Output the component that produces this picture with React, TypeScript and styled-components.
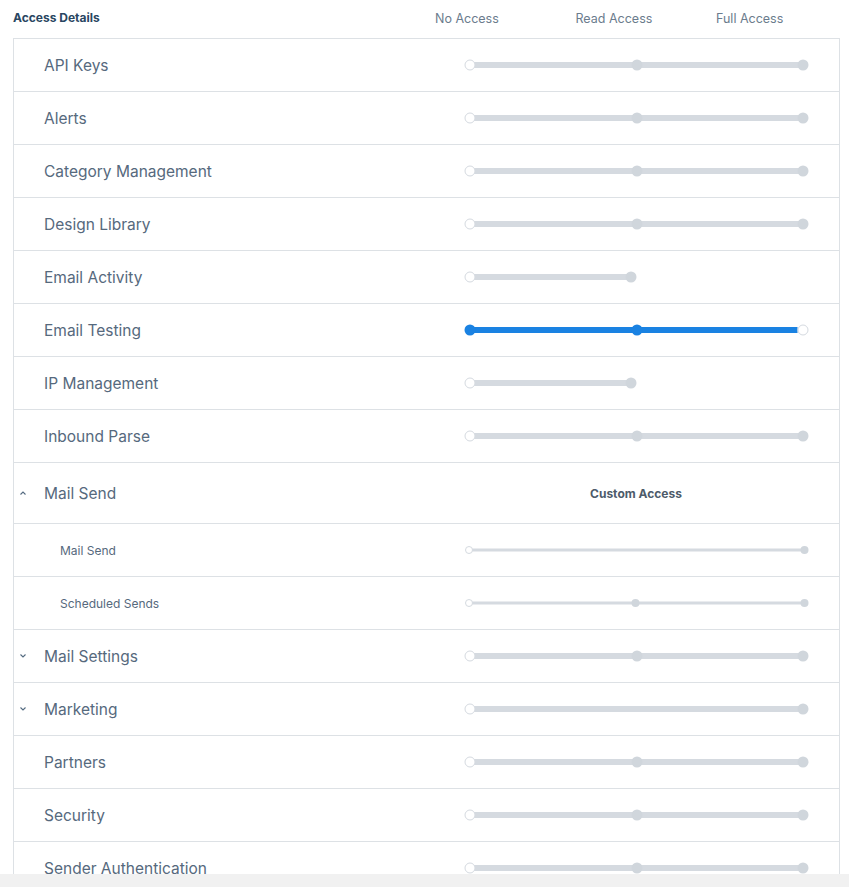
import styled, { createGlobalStyle } from 'styled-components';

type Stops = number[];

interface Permission {
  name: string;
  stops: Stops;
  active?: boolean;
  toggle?: 'open' | 'closed';
  children?: { name: string; stops: Stops }[];
}

const FULL: Stops = [7, 174, 340];
const SHORT: Stops = [7, 168];

const permissions: Permission[] = [
  { name: 'API Keys', stops: FULL },
  { name: 'Alerts', stops: FULL },
  { name: 'Category Management', stops: FULL },
  { name: 'Design Library', stops: FULL },
  { name: 'Email Activity', stops: SHORT },
  { name: 'Email Testing', stops: FULL, active: true },
  { name: 'IP Management', stops: SHORT },
  { name: 'Inbound Parse', stops: FULL },
  {
    name: 'Mail Send',
    stops: [],
    toggle: 'open',
    children: [
      { name: 'Mail Send', stops: [6, 341.5] },
      { name: 'Scheduled Sends', stops: [6, 172.5, 341.5] },
    ],
  },
  { name: 'Mail Settings', stops: FULL, toggle: 'closed' },
  { name: 'Marketing', stops: [7, 340], toggle: 'closed' },
  { name: 'Partners', stops: FULL },
  { name: 'Security', stops: FULL },
  { name: 'Sender Authentication', stops: FULL },
];

const GlobalStyle = createGlobalStyle`
  html, body { margin: 0; padding: 0; background: #fff; }
  body { font-family: Inter, "Open Sans", "Liberation Sans", sans-serif; }
`;

const Viewport = styled.div`
  height: 887px;
  display: flex;
  flex-direction: column;
  overflow: hidden;
`;

const Scroller = styled.div`
  flex: 1;
  min-height: 0;
  overflow: hidden;
  padding-left: 13px;
`;

const ScrollTrack = styled.div`
  height: 13px;
  flex-shrink: 0;
  background: #f1f1f1;
`;

const Header = styled.div`
  display: flex;
  height: 38px;
`;

const Title = styled.h3`
  margin: 0;
  flex: 0 0 422px;
  padding-top: 10px;
  font-size: 12px;
  font-weight: 700;
  color: #294661;
`;

const ColumnLabel = styled.span`
  flex: 0 0 140.5px;
  padding-top: 11px;
  font-size: 12.5px;
  color: #6b7c8d;
`;

const Table = styled.div`
  width: 827px;
  box-sizing: border-box;
  border: 1px solid #dde1e5;
  border-bottom: none;
`;

const Row = styled.div<{ $height: number }>`
  display: flex;
  align-items: center;
  height: ${({ $height }) => $height}px;
  box-sizing: border-box;
  border-bottom: 1px solid #dde1e5;
`;

const LabelCell = styled.div<{ $sub?: boolean }>`
  display: flex;
  align-items: center;
  flex: 0 0 449px;
  box-sizing: border-box;
  padding-left: ${({ $sub }) => ($sub ? '46px' : '0')};
  font-size: ${({ $sub }) => ($sub ? '12px' : '15.5px')};
  color: #56697d;
`;

const ChevronSlot = styled.span`
  display: flex;
  align-items: center;
  width: 30px;
  padding-left: 5px;
  box-sizing: border-box;
`;

const SliderCell = styled.div`
  display: flex;
  align-items: center;
  width: 350px;
`;

const CustomLabel = styled.span`
  width: 346px;
  text-align: center;
  font-size: 12px;
  font-weight: 700;
  color: #4d5b6a;
`;

const TRACK = '#d5dae0';
const BLUE = '#1a82e2';

function Chevron({ up }: { up: boolean }) {
  return (
    <svg width="8" height="6" viewBox="0 0 8 6">
      <path
        d={up ? 'M1.5 4.5 L4 2 L6.5 4.5' : 'M1.5 1.5 L4 4 L6.5 1.5'}
        fill="none"
        stroke="#546b81"
        strokeWidth="1.1"
      />
    </svg>
  );
}

function Slider({ stops, small, active }: { stops: Stops; small?: boolean; active?: boolean }) {
  const r = small ? 4 : 5.5;
  const thick = small ? 3 : 6;
  const cy = 7;
  const first = stops[0];
  const last = stops[stops.length - 1];
  return (
    <svg width="350" height="14" viewBox="0 0 350 14">
      <line
        x1={first}
        x2={active ? last - r : last}
        y1={cy}
        y2={cy}
        stroke={active ? BLUE : TRACK}
        strokeWidth={thick}
      />
      {stops.map((x, i) => {
        const hollow = active ? i === stops.length - 1 : i === 0;
        return hollow ? (
          <circle key={i} cx={x} cy={cy} r={r - 0.5} fill="#fff" stroke={TRACK} strokeWidth="1" />
        ) : (
          <circle key={i} cx={x} cy={cy} r={r} fill={active ? BLUE : '#d0d6dc'} />
        );
      })}
    </svg>
  );
}

export default function App() {
  return (
    <Viewport>
      <GlobalStyle />
      <Scroller>
        <Header>
          <Title>Access Details</Title>
          <ColumnLabel>No Access</ColumnLabel>
          <ColumnLabel>Read Access</ColumnLabel>
          <ColumnLabel>Full Access</ColumnLabel>
        </Header>
        <Table>
          {permissions.map((p) => (
            <div key={p.name}>
              <Row $height={p.children ? 61 : 53}>
                <LabelCell>
                  <ChevronSlot>{p.toggle && <Chevron up={p.toggle === 'open'} />}</ChevronSlot>
                  {p.name}
                </LabelCell>
                <SliderCell>
                  {p.children ? (
                    <CustomLabel>Custom Access</CustomLabel>
                  ) : (
                    <Slider stops={p.stops} active={p.active} />
                  )}
                </SliderCell>
              </Row>
              {p.children?.map((c) => (
                <Row key={c.name} $height={53}>
                  <LabelCell $sub>{c.name}</LabelCell>
                  <SliderCell>
                    <Slider stops={c.stops} small />
                  </SliderCell>
                </Row>
              ))}
            </div>
          ))}
        </Table>
      </Scroller>
      <ScrollTrack />
    </Viewport>
  );
}
